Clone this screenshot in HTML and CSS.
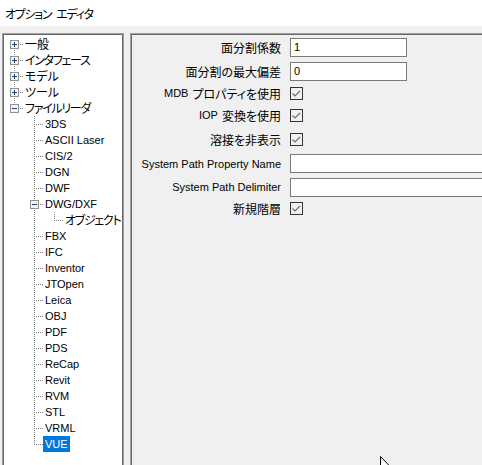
FILE: index.html
```html
<!DOCTYPE html>
<html lang="ja">
<head>
<meta charset="utf-8">
<title>オプション エディタ</title>
<link rel="stylesheet" href="styles.css">
</head>
<body>
<div class="window">
  <div class="titlebar"><span class="ja kana">オプション</span><span class="ja kana title2">エディタ</span></div>
  <div class="main">
    <div class="tree">
      <div class="row"><span class="cell vfirst"><svg class="box" width="9" height="9" viewBox="0 0 9 9"><rect x="0.5" y="0.5" width="8" height="8" class="boxr"/><path d="M2 4.5h5M4.5 2v5" class="sign"/></svg></span><span class="text ja">一般</span></div>
      <div class="row"><span class="cell vmid"><svg class="box" width="9" height="9" viewBox="0 0 9 9"><rect x="0.5" y="0.5" width="8" height="8" class="boxr"/><path d="M2 4.5h5M4.5 2v5" class="sign"/></svg></span><span class="text ja kana">インタフェース</span></div>
      <div class="row"><span class="cell vmid"><svg class="box" width="9" height="9" viewBox="0 0 9 9"><rect x="0.5" y="0.5" width="8" height="8" class="boxr"/><path d="M2 4.5h5M4.5 2v5" class="sign"/></svg></span><span class="text ja">モデル</span></div>
      <div class="row"><span class="cell vmid"><svg class="box" width="9" height="9" viewBox="0 0 9 9"><rect x="0.5" y="0.5" width="8" height="8" class="boxr"/><path d="M2 4.5h5M4.5 2v5" class="sign"/></svg></span><span class="text ja">ツール</span></div>
      <div class="row"><span class="cell vlast"><svg class="box" width="9" height="9" viewBox="0 0 9 9"><rect x="0.5" y="0.5" width="8" height="8" class="boxr"/><path d="M2 4.5h5" class="sign"/></svg></span><span class="text ja kana">ファイルリーダ</span></div>
      <div class="row"><span class="cell"></span><span class="cell vmid"></span><span class="text">3DS</span></div>
      <div class="row"><span class="cell"></span><span class="cell vmid"></span><span class="text">ASCII Laser</span></div>
      <div class="row"><span class="cell"></span><span class="cell vmid"></span><span class="text">CIS/2</span></div>
      <div class="row"><span class="cell"></span><span class="cell vmid"></span><span class="text">DGN</span></div>
      <div class="row"><span class="cell"></span><span class="cell vmid"></span><span class="text">DWF</span></div>
      <div class="row"><span class="cell"></span><span class="cell vmid"><svg class="box" width="9" height="9" viewBox="0 0 9 9"><rect x="0.5" y="0.5" width="8" height="8" class="boxr"/><path d="M2 4.5h5" class="sign"/></svg></span><span class="text">DWG/DXF</span></div>
      <div class="row"><span class="cell"></span><span class="cell vline"></span><span class="cell vlast"></span><span class="text ja kana clip">オブジェクト プロパティ</span></div>
      <div class="row"><span class="cell"></span><span class="cell vmid"></span><span class="text">FBX</span></div>
      <div class="row"><span class="cell"></span><span class="cell vmid"></span><span class="text">IFC</span></div>
      <div class="row"><span class="cell"></span><span class="cell vmid"></span><span class="text">Inventor</span></div>
      <div class="row"><span class="cell"></span><span class="cell vmid"></span><span class="text">JTOpen</span></div>
      <div class="row"><span class="cell"></span><span class="cell vmid"></span><span class="text">Leica</span></div>
      <div class="row"><span class="cell"></span><span class="cell vmid"></span><span class="text">OBJ</span></div>
      <div class="row"><span class="cell"></span><span class="cell vmid"></span><span class="text">PDF</span></div>
      <div class="row"><span class="cell"></span><span class="cell vmid"></span><span class="text">PDS</span></div>
      <div class="row"><span class="cell"></span><span class="cell vmid"></span><span class="text">ReCap</span></div>
      <div class="row"><span class="cell"></span><span class="cell vmid"></span><span class="text">Revit</span></div>
      <div class="row"><span class="cell"></span><span class="cell vmid"></span><span class="text">RVM</span></div>
      <div class="row"><span class="cell"></span><span class="cell vmid"></span><span class="text">STL</span></div>
      <div class="row"><span class="cell"></span><span class="cell vmid"></span><span class="text">VRML</span></div>
      <div class="row"><span class="cell"></span><span class="cell vlast"></span><span class="text selected">VUE</span></div>
    </div>
    <div class="props">
      <div class="plabel"><span class="ja">面分割係数</span></div>
      <div class="pctrl"><div class="input">1</div></div>

      <div class="plabel"><span class="ja">面分割の最大偏差</span></div>
      <div class="pctrl"><div class="input">0</div></div>

      <div class="plabel"><span class="latin">MDB</span><span class="ja">プロパティを使用</span></div>
      <div class="pctrl"><svg class="check" width="13" height="13" viewBox="0 0 13 13"><rect x="0.5" y="0.5" width="12" height="12" class="checkr"/><path d="M2.5 6.5l2.5 2.5 5-5" class="tick"/></svg></div>

      <div class="plabel"><span class="latin">IOP</span><span class="ja">変換を使用</span></div>
      <div class="pctrl"><svg class="check" width="13" height="13" viewBox="0 0 13 13"><rect x="0.5" y="0.5" width="12" height="12" class="checkr"/><path d="M2.5 6.5l2.5 2.5 5-5" class="tick"/></svg></div>

      <div class="plabel"><span class="ja">溶接を非表示</span></div>
      <div class="pctrl"><svg class="check" width="13" height="13" viewBox="0 0 13 13"><rect x="0.5" y="0.5" width="12" height="12" class="checkr"/><path d="M2.5 6.5l2.5 2.5 5-5" class="tick"/></svg></div>

      <div class="plabel"><span>System Path Property Name</span></div>
      <div class="pctrl"><div class="input wide"></div></div>

      <div class="plabel"><span>System Path Delimiter</span></div>
      <div class="pctrl"><div class="input wide"></div></div>

      <div class="plabel"><span class="ja">新規階層</span></div>
      <div class="pctrl"><svg class="check" width="13" height="13" viewBox="0 0 13 13"><rect x="0.5" y="0.5" width="12" height="12" class="checkr"/><path d="M2.5 6.5l2.5 2.5 5-5" class="tick"/></svg></div>
    </div>
  </div>
  <svg class="cursor" width="14" height="20" viewBox="0 0 14 20"><path d="M0.5 0.5v15l3.5-3.5 2.5 6 2-1-2.5-5.5h5z" fill="#fff" stroke="#000"/></svg>
</div>
</body>
</html>
```

FILE: styles.css
```css
* { box-sizing: border-box; }
html, body { margin: 0; padding: 0; }
body {
  background: #f0f0f0;
  font-family: "Liberation Sans", "Noto Sans CJK JP", sans-serif;
  font-size: 11px;
  color: #000;
}
.ja {
  font-family: "Noto Sans CJK JP", sans-serif;
  font-size: 12px;
  font-feature-settings: "palt";
}
.kana { letter-spacing: -1.3px; }
.title2 { margin-left: 5px; }
.latin { margin-right: 4px; }
.window {
  position: relative;
  width: 482px;
  height: 465px;
  overflow: hidden;
  background: #f0f0f0;
}
.titlebar {
  height: 26px;
  background: #ffffff;
  padding-left: 5px;
  line-height: 28px;
}
.main {
  display: flex;
  gap: 6px;
  padding-top: 7px;
  padding-left: 2px;
}
.tree {
  flex: 0 0 122px;
  height: 440px;
  background: #fff;
  border-top: 1px solid #a0a0a0;
  border-left: 1px solid #a0a0a0;
  border-right: 1px solid #a0a0a0;
  box-shadow: inset 1px 1px 0 #696969, inset -1px 0 0 #696969;
  padding: 2px 0 0 1px;
  overflow: hidden;
}
.row {
  display: flex;
  height: 16px;
  line-height: 16px;
  white-space: nowrap;
}
.cell {
  flex: 0 0 20px;
  height: 16px;
  display: flex;
  align-items: center;
  padding-left: 6px;
  background-repeat: no-repeat;
}
.vmid {
  background-image:
    repeating-linear-gradient(to bottom, #808080 0 1px, transparent 1px 2px),
    repeating-linear-gradient(to right, #808080 0 1px, transparent 1px 2px);
  background-size: 1px 16px, 10px 1px;
  background-position: 10px 0, 10px 8px;
}
.vfirst {
  background-image:
    repeating-linear-gradient(to bottom, #808080 0 1px, transparent 1px 2px),
    repeating-linear-gradient(to right, #808080 0 1px, transparent 1px 2px);
  background-size: 1px 8px, 10px 1px;
  background-position: 10px 8px, 10px 8px;
}
.vlast {
  background-image:
    repeating-linear-gradient(to bottom, #808080 0 1px, transparent 1px 2px),
    repeating-linear-gradient(to right, #808080 0 1px, transparent 1px 2px);
  background-size: 1px 8px, 10px 1px;
  background-position: 10px 0, 10px 8px;
}
.vline {
  background-image: repeating-linear-gradient(to bottom, #808080 0 1px, transparent 1px 2px);
  background-size: 1px 16px;
  background-position: 10px 0;
}
.box { display: block; }
.boxr { fill: #f4f4f4; stroke: #919191; }
.sign { stroke: #243f7a; stroke-width: 1; fill: none; }
.text {
  padding: 0;
  margin-left: 1px;
}
.clip {
  min-width: 0;
  overflow: hidden;
}
.selected {
  background: #0078d7;
  color: #fff;
  margin-left: -1px;
  padding: 0 2px 0 2px;
}
.props {
  flex: 1 1 auto;
  height: 440px;
  border-top: 1px solid #a0a0a0;
  border-left: 1px solid #a0a0a0;
  box-shadow: inset 1px 1px 0 #696969;
  padding-top: 2px;
  padding-left: 2px;
  display: grid;
  grid-template-columns: 149px 200px;
  column-gap: 8px;
  grid-template-rows: 23px 24px 20px 24px 24px 25px 22px 20px;
  align-content: start;
  overflow: hidden;
}
.plabel {
  display: flex;
  align-items: center;
  justify-content: flex-end;
  padding-right: 1px;
  white-space: nowrap;
}
.pctrl {
  display: flex;
  align-items: center;
}
.input {
  width: 117px;
  height: 19px;
  background: #fff;
  border: 1px solid #7a7a7a;
  padding-left: 3px;
  line-height: 17px;
}
.input.wide { width: 200px; }
.check { display: block; }
.checkr { fill: #f0f0f0; stroke: #333; }
.tick { stroke: #6d6d6d; stroke-width: 1.2; fill: none; }
.cursor {
  position: absolute;
  left: 380px;
  top: 456px;
}
```
